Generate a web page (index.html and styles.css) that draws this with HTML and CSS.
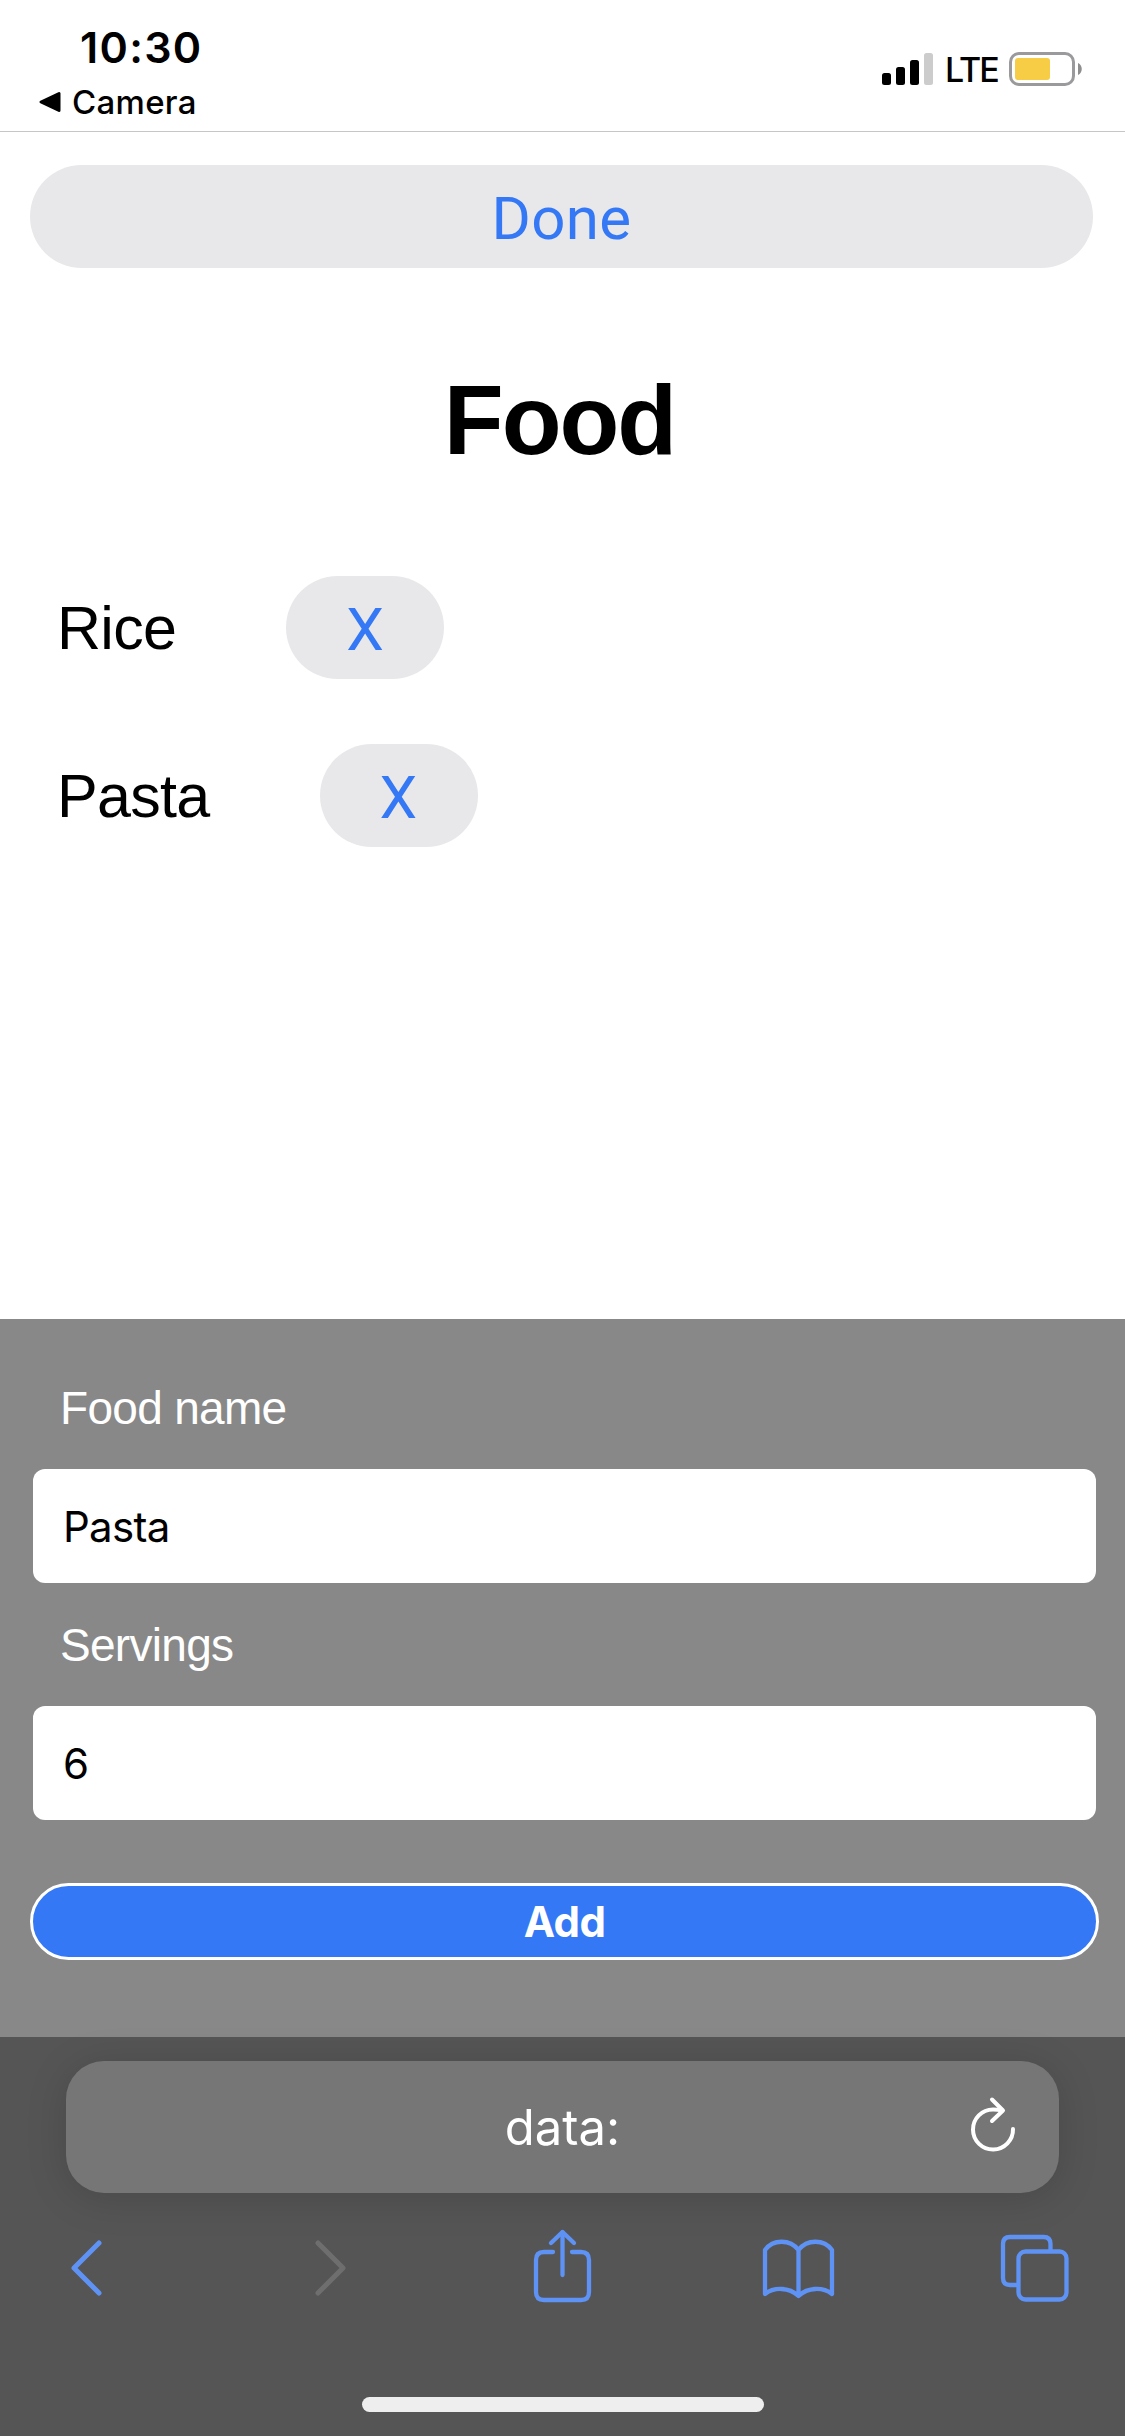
FILE: index.html
```html
<!DOCTYPE html>
<html lang="en">
<head>
    <meta charset="UTF-8">
    <meta name="viewport" content="width=device-width, initial-scale=1.0">
    <title>Food</title>
    <link rel="stylesheet" href="styles.css">
</head>
<body>

<!-- Status Bar -->
<header class="status-bar">
    <div class="status-left">
        <div class="time">10:30</div>
        <div class="back-app">
            <svg width="22" height="22" viewBox="0 0 22 22"><path d="M2 11 L20 2.500 V19.500 Z" stroke="#000" stroke-width="3" stroke-linejoin="round"/></svg>
            <span>Camera</span>
        </div>
    </div>
    <div class="status-right">
        <svg class="signal" width="51" height="32" viewBox="0 0 51 32">
            <rect x="0" y="20" width="9" height="12" rx="2.500"/>
            <rect x="14" y="14" width="9" height="18" rx="2.500"/>
            <rect x="28" y="7" width="9" height="25" rx="2.500"/>
            <rect x="42" y="0" width="9" height="32" rx="2.500" fill="#cccccc"/>
        </svg>
        <span class="network">LTE</span>
        <svg class="battery" width="74" height="34" viewBox="0 0 74 34">
            <rect x="1.500" y="1.500" width="63" height="31" rx="8.500" fill="none" stroke="#9a9a9c" stroke-width="3"/>
            <rect x="6" y="6" width="35" height="22" rx="3" fill="#f7cd46"/>
            <path d="M69 11 C74 13 74 21 69 23 Z" fill="#8e8e90"/>
        </svg>
    </div>
</header>

<!-- Food List -->
<main class="content">
    <button class="button done">Done</button>
    <h1 class="title">Food</h1>
    <ul class="food-list">
        <li class="food-item"><span class="food-name">Rice</span><button class="button remove">X</button></li>
        <li class="food-item"><span class="food-name">Pasta</span><button class="button remove">X</button></li>
    </ul>
</main>

<!-- Add Form -->
<form class="add-form">
    <label for="name" class="label-name">Food name</label>
    <input id="name" type="text" value="Pasta">
    <label for="servings" class="label-servings">Servings</label>
    <input id="servings" type="text" value="6">
    <button class="add" type="button">Add</button>
</form>

<!-- Browser Bar -->
<footer class="browser">
    <div class="url-bar">
        <span>data:</span>
        <svg class="reload" width="50" height="60" viewBox="0 0 50 60" fill="none" stroke="#fff" stroke-width="4" stroke-linecap="round" stroke-linejoin="round">
            <path d="M45 33 A20 20 0 1 1 25 13.500 Q30 13.500 34 14.500"/>
            <path d="M24 3.500 L35 14.500 L24 25"/>
        </svg>
    </div>
    <nav class="toolbar">
        <svg class="icon back" viewBox="0 0 80 80"><path d="M51 15 L26 40 L51 65"/></svg>
        <svg class="icon forward" viewBox="0 0 80 80"><path d="M33 15 L58 40 L33 65"/></svg>
        <svg class="icon" viewBox="0 0 80 80">
            <path d="M31 24 H22 Q14 24 14 32 V64 Q14 72 22 72 H59 Q67 72 67 64 V32 Q67 24 59 24 H50"/>
            <path d="M40.500 4.500 V47"/>
            <path d="M29 15 L40.500 4 L52 15"/>
        </svg>
        <svg class="icon" viewBox="0 0 80 80">
            <path d="M39.500 22 C31 11 14 11 6 22 V66 C15 59 30 59 39.500 68 C49 59 64 59 73 66 V22 C65 11 48 11 39.500 22 V68"/>
        </svg>
        <svg class="icon" viewBox="0 0 80 80">
            <path d="M54.500 22 V16 Q54.500 9 47.500 9 H14 Q7 9 7 16 V50 Q7 57 14 57 H22"/>
            <rect x="22.500" y="23.500" width="48" height="48" rx="7"/>
        </svg>
    </nav>
    <div class="home-indicator"></div>
</footer>

</body>
</html>
```
FILE: styles.css
```css
* {
    box-sizing: border-box;
}

body {
    font-family: "Liberation Sans", Arial, sans-serif;
    margin: 0;
    height: 2436px;
    display: flex;
    flex-direction: column;
    color: #000;
    background-color: #fff;
    overflow: hidden;
}

button, input {
    margin: 0;
    padding: 0;
    border: none;
    font-family: Inter, sans-serif;
}

svg {
    display: block;
}

.status-bar {
    height: 132px;
    padding: 0 42px 0 39px;
    display: flex;
    justify-content: space-between;
    border-bottom: 1px solid #c6c6c6;
    font-family: Inter, sans-serif;
}

.status-left {
    padding-top: 22px;
}

.time {
    margin: 0 0 10px 41px;
    font-size: 43px;
    line-height: 50px;
    font-weight: 600;
    letter-spacing: 1.3px;
}

.back-app {
    display: flex;
    align-items: center;
    gap: 11px;
    font-size: 33px;
    line-height: 40px;
    font-weight: 450;
    letter-spacing: 0.3px;
}

.status-right {
    height: 138px;
    display: flex;
    align-items: center;
}

.network {
    width: 76px;
    padding: 2px 0 0 12px;
    font-size: 34px;
    line-height: 40px;
    font-weight: 500;
    letter-spacing: -2px;
}

.content {
    height: 1187px;
    padding: 33px 32px 0 30px;
}

.button {
    display: block;
    height: 103px;
    padding-top: 4px;
    border-radius: 52px;
    background-color: #e8e8ea;
    color: #3478f6;
    font-family: Roboto, sans-serif;
    font-size: 60px;
    letter-spacing: 0.4px;
}

.done {
    width: 100%;
}

.title {
    margin: 95px 0 99px;
    font-size: 98px;
    line-height: 114px;
    letter-spacing: -2px;
    text-align: center;
    text-indent: -4px;
}

.food-list {
    list-style: none;
    margin: 0;
    padding: 0 0 0 27px;
    display: flex;
    flex-direction: column;
    gap: 65px;
}

.food-item {
    display: flex;
    align-items: center;
}

.food-name {
    margin-right: 110px;
    font-size: 61px;
    line-height: 70px;
    letter-spacing: -0.7px;
}

.remove {
    width: 158px;
}

.add-form {
    height: 718px;
    padding: 62px 26px 0 30px;
    display: flex;
    flex-direction: column;
    background-color: #888888;
    color: #fff;
}

.add-form label {
    padding-left: 30px;
    font-size: 46px;
    line-height: 54px;
    letter-spacing: -0.7px;
}

.add-form input {
    width: 1063px;
    height: 114px;
    margin: 34px 0 35px 3px;
    padding: 0 30px;
    border-radius: 12px;
    background-color: #fff;
    color: #000;
    font-size: 42px;
    letter-spacing: -0.7px;
}

.add {
    height: 77px;
    margin-top: 28px;
    border: 3px solid #fff;
    border-radius: 39px;
    background-color: #3478f6;
    color: #fff;
    font-size: 42px;
    font-weight: 700;
    letter-spacing: -0.6px;
}

.browser {
    height: 399px;
    padding-top: 24px;
    display: flex;
    flex-direction: column;
    align-items: center;
    background-color: #555555;
}

.url-bar {
    position: relative;
    width: 993px;
    height: 132px;
    display: flex;
    align-items: center;
    justify-content: center;
    border-radius: 38px;
    background-color: #767676;
    box-shadow: 0 5px 40px rgba(0, 0, 0, 0.15);
    color: #fff;
    font-family: Inter, sans-serif;
    font-size: 49px;
}

.reload {
    position: absolute;
    right: 41px;
    top: 35px;
}

.toolbar {
    width: 1028px;
    margin: 35px 2px 0 0;
    display: flex;
    justify-content: space-between;
}

.icon {
    width: 80px;
    height: 80px;
    fill: none;
    stroke: #5e93f5;
    stroke-width: 4.300px;
    stroke-linecap: round;
    stroke-linejoin: round;
}

.back, .forward {
    stroke-width: 5px;
}

.forward {
    stroke: #6e6e6e;
}

.home-indicator {
    width: 402px;
    height: 15px;
    margin-top: 89px;
    border-radius: 8px;
    background-color: #eeeeee;
}
```
